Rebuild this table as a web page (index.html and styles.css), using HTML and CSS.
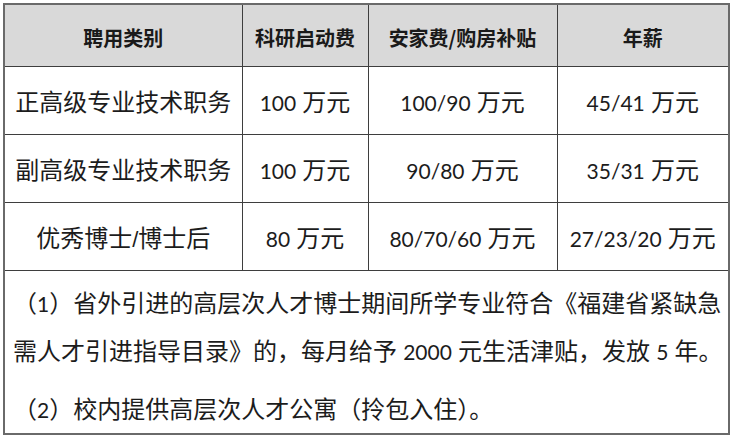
FILE: index.html
```html
<!DOCTYPE html>
<html lang="zh-CN">
<head>
<meta charset="utf-8">
<title>人才待遇</title>
<link rel="stylesheet" href="styles.css">
</head>
<body>
<table class="pay">
  <colgroup>
    <col class="c1"><col class="c2"><col class="c3"><col class="c4">
  </colgroup>
  <thead>
    <tr class="head">
      <th>聘用类别</th>
      <th>科研启动费</th>
      <th>安家费/购房补贴</th>
      <th>年薪</th>
    </tr>
  </thead>
  <tbody>
    <tr class="row">
      <td>正高级专业技术职务</td>
      <td><span class="num">100</span> 万元</td>
      <td><span class="num">100/90</span> 万元</td>
      <td><span class="num">45/41</span> 万元</td>
    </tr>
    <tr class="row">
      <td>副高级专业技术职务</td>
      <td><span class="num">100</span> 万元</td>
      <td><span class="num">90/80</span> 万元</td>
      <td><span class="num">35/31</span> 万元</td>
    </tr>
    <tr class="row">
      <td>优秀博士<span class="slash">/</span>博士后</td>
      <td><span class="num">80</span> 万元</td>
      <td><span class="num">80/70/60</span> 万元</td>
      <td><span class="num">27/23/20</span> 万元</td>
    </tr>
    <tr class="notes">
      <td colspan="4">
        <p class="note">（<span class="num">1</span>）省外引进的高层次人才博士期间所学专业符合《福建省紧缺急<br>需人才引进指导目录》的，每月给予 <span class="num">2000</span> 元生活津贴，发放 <span class="num">5</span> 年。</p>
        <p class="note">（<span class="num">2</span>）校内提供高层次人才公寓（拎包入住）。</p>
      </td>
    </tr>
  </tbody>
</table>
</body>
</html>
```

FILE: styles.css
```css
html, body {
  margin: 0;
  padding: 0;
  background: #ffffff;
}

body {
  padding: 3px 0 0 3px;
  font-family: Lato, "Noto Sans CJK SC", sans-serif;
  color: #1c1c1c;
}

.pay {
  border-collapse: collapse;
  table-layout: fixed;
  width: 725px;
  border: 2px solid #6a6a6a;
}

.c1 { width: 238px; }
.c2 { width: 126px; }
.c3 { width: 189px; }
.c4 { width: 172px; }

.pay th,
.pay td {
  border: 1px solid #3e3e3e;
  padding: 0;
  text-align: center;
  vertical-align: middle;
  white-space: nowrap;
}

.head th {
  height: 58px;
  background: #d9d9d9;
  font-family: "Noto Sans CJK SC", sans-serif;
  font-size: 20px;
  font-weight: 700;
  color: #1a1a1a;
  padding-top: 3px;
}

.row td {
  height: 67px;
  font-size: 24px;
  font-weight: 400;
}

.num {
  font-family: Lato, sans-serif;
  font-size: 21px;
}

.slash {
  font-family: "Liberation Sans", sans-serif;
  font-size: 22px;
}

.notes td {
  height: 153px;
  text-align: left;
  vertical-align: top;
  padding: 8px 6px 0 8px;
  font-size: 24px;
}

.note {
  margin: 0;
  line-height: 47px;
  white-space: nowrap;
}

.note + .note {
  margin-top: 10px;
}
```
